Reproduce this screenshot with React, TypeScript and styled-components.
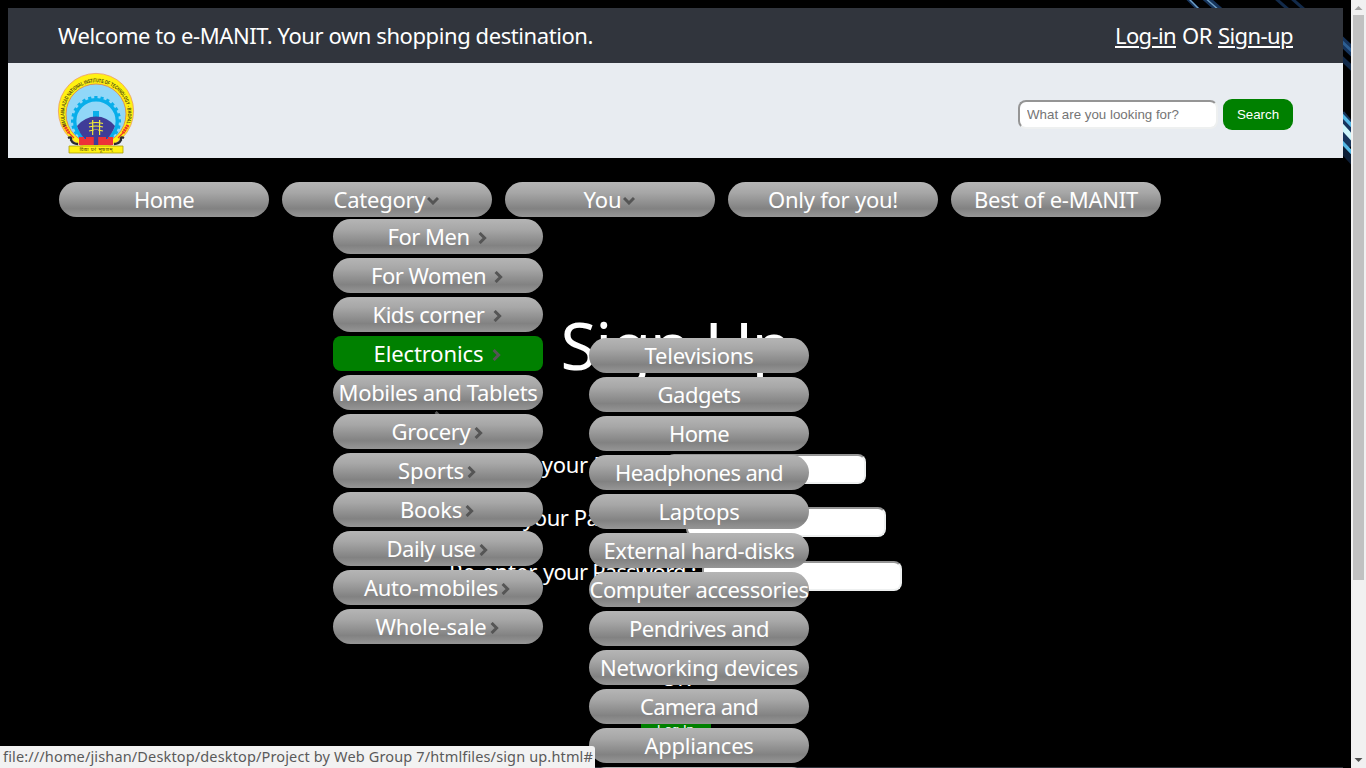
import React, { useLayoutEffect, useRef, useState } from 'react';
import styled, { createGlobalStyle, css } from 'styled-components';

const Global = createGlobalStyle`
  html, body { margin: 0; padding: 0; background: #000; overflow: hidden; }
  * { box-sizing: border-box; }
`;

const Window = styled.div`
  display: flex;
  position: relative;
  width: 1366px;
  height: 768px;
  overflow: hidden;
  background: #000;
  color: #fff;
  font: 22px 'Noto Sans', 'Open Sans', sans-serif;
`;

const Page = styled.main`
  position: relative;
  display: flex;
  flex-direction: column;
  width: 1351px;
  height: 768px;
  padding: 8px 8px 0;
  overflow: hidden;
`;

const Streaks = styled.svg`
  position: absolute;
  top: 0;
  right: 0;
`;

const Greeting = styled.header`
  position: relative;
  display: flex;
  flex: none;
  align-items: center;
  justify-content: space-between;
  height: 55px;
  padding: 0 50px 2px 50px;
  background: #31353d;
`;

const Account = styled.div`
  display: flex;
  gap: 6px;
`;

const Link = styled.a`
  color: #fff;
  span {
    text-decoration: underline;
    text-decoration-thickness: 2px;
    text-underline-offset: 2px;
  }
`;

const Brand = styled.section`
  position: relative;
  display: flex;
  flex: none;
  justify-content: space-between;
  height: 95px;
  padding: 9px 50px 0 49px;
  background: #e8ecf1;
`;

const Search = styled.form`
  display: flex;
  gap: 5px;
  height: 31px;
  margin-top: 27px;
`;

const Field = styled.input`
  width: 200px;
  height: 30px;
  padding: 1px 7px;
  border: 2px solid;
  border-color: #959595 #eef0f0 #eef0f0 #959595;
  border-radius: 8px;
  background: #fff;
  font: 13.33px 'Liberation Sans', Arial, sans-serif;
  &::placeholder { color: #757575; }
`;

const SearchField = styled(Field)`
  margin-top: 1px;
  height: 29px;
  padding: 0 7px;
`;

const Button = styled.button`
  width: 70px;
  height: 31px;
  padding: 0;
  border: 0;
  border-radius: 9px;
  background: #008000;
  color: #fff;
  font: 13.33px 'Liberation Sans', Arial, sans-serif;
`;

const Nav = styled.nav`
  display: flex;
  flex: none;
  gap: 13px;
  margin: 24px 0 0 51px;
`;

const NavItem = styled.div`
  position: relative;
`;

const Pill = styled.div<{ $wide?: boolean; $active?: boolean }>`
  position: relative;
  display: flex;
  align-items: center;
  justify-content: center;
  width: ${p => (p.$wide ? 220 : 210)}px;
  height: 35px;
  padding-bottom: 1px;
  border-radius: 17.5px;
  background: linear-gradient(#b5b5b5 0%, #a7a7a7 30%, #828282 76%, #969696 100%);
  line-height: 30px;
  white-space: nowrap;
  ${p => p.$active && css`
    border-radius: 8px;
    background: #008000;
  `}
`;

const Menu = styled.div`
  position: absolute;
  z-index: 2;
  display: flex;
  flex-direction: column;
  gap: 4px;
  top: 37px;
  left: 51px;
`;

const SubMenu = styled(Menu)`
  top: 2px;
  left: 256px;
`;

const MenuItem = styled.div`
  position: relative;
`;

const Arrow = styled.svg<{ $gap: number }>`
  flex: none;
  margin: 3px 2px 0 ${p => p.$gap}px;
`;

const WrappedArrow = styled.svg`
  position: absolute;
  top: 36px;
  left: 101px;
`;

const SignUp = styled.section`
  display: flex;
  flex-direction: column;
  align-items: center;
  padding-top: 80px;
`;

const Title = styled.h1`
  height: 97px;
  margin: 0;
  font-size: 66px;
  font-weight: 400;
  line-height: 94px;
`;

const Rows = styled.div`
  display: flex;
  flex-direction: column;
  align-items: center;
  gap: 23px;
  padding-top: 60px;
`;

const FormRow = styled.label<{ $trail?: number }>`
  display: flex;
  height: 30px;
  padding-right: ${p => p.$trail ?? 0}px;
  line-height: 21px;
  ${Field} { margin-left: 6px; }
  &:last-child { margin-top: 1px; }
`;

const Or = styled.div`
  margin-top: 72px;
  height: 51px;
  line-height: 28px;
`;

const Bottom = styled.div`
  position: absolute;
  left: 8px;
  right: 8px;
  bottom: 0;
  height: 1px;
  background: #31353d;
`;

const ScrollTrack = styled.aside`
  display: flex;
  flex-direction: column;
  justify-content: space-between;
  align-items: center;
  width: 15px;
  height: 768px;
  background: #f1f1f1;
`;

const Thumb = styled.div`
  width: 11px;
  height: 565px;
  margin-bottom: 173px;
  background: #c1c1c1;
`;

const Status = styled.div`
  position: absolute;
  z-index: 5;
  left: 0;
  bottom: 0;
  display: flex;
  align-items: center;
  width: 595px;
  height: 22px;
  padding: 0 0 2px 3px;
  border-top-right-radius: 3px;
  background: #f2f2f2;
  color: #5a5a5a;
  font-size: 14.5px;
  line-height: 20px;
`;

const Run = styled.span`
  display: inline-block;
  white-space: pre;
`;

/* Tracks a run of text so that it spans the given width. */
function Fit({ w, children }: { w: number; children: string }) {
  const ref = useRef<HTMLSpanElement>(null);
  const [spacing, setSpacing] = useState(0);
  useLayoutEffect(() => {
    if (ref.current) {
      const natural = ref.current.getBoundingClientRect().width;
      setSpacing((w - natural) / children.length);
    }
  }, [w, children]);
  return <Run ref={ref} style={{ letterSpacing: spacing }}>{children}</Run>;
}

function Right({ gap }: { gap: number }) {
  return (
    <Arrow $gap={gap} width="9" height="12" viewBox="0 0 9 12">
      <path d="M1.6 1 6.6 6 1.6 11" fill="none" stroke="#555" strokeWidth="3" />
    </Arrow>
  );
}

function Down() {
  return (
    <Arrow $gap={1} width="12" height="9" viewBox="0 0 12 9">
      <path d="M1 2 6 7 11 2" fill="none" stroke="#555" strokeWidth="3" />
    </Arrow>
  );
}

const categories: [string, number, number][] = [
  ['For Men', 82, 8], ['For Women', 115, 8], ['Kids corner', 112, 8],
  ['Electronics', 110, 8], ['Mobiles and Tablets', 199, 0], ['Grocery', 79, 3],
  ['Sports', 66, 3], ['Books', 62, 3], ['Daily use', 89, 3],
  ['Auto-mobiles', 134, 3], ['Whole-sale', 111, 3],
];

const electronics: [string, number][] = [
  ['Televisions', 109], ['Gadgets', 83], ['Home', 60], ['Headphones and', 168],
  ['Laptops', 81], ['External hard-disks', 191], ['Computer accessories', 219],
  ['Pendrives and', 140], ['Networking devices', 198], ['Camera and', 118],
  ['Appliances', 109], ['', 0],
];

const teeth = Array.from({ length: 24 }, (_, i) => i * 15);

function Logo() {
  return (
    <svg width="78" height="82" viewBox="0 0 78 82">
      <defs>
        <path id="ring" d="M9.5 54 A31.8 31.8 0 1 1 68.5 54" />
        <clipPath id="disc"><circle cx="39" cy="42" r="29.5" /></clipPath>
      </defs>
      <circle cx="39" cy="39" r="37.6" fill="#fff112" stroke="#ee9a62" strokeWidth=".8" />
      <circle cx="39" cy="42" r="30" fill="#91d7f8" stroke="#e28a45" strokeWidth=".9" />
      <g clipPath="url(#disc)">
        <circle cx="39" cy="49" r="21.3" fill="none" stroke="#08aeea" strokeWidth="3.4" />
        {teeth.map(a => (
          <rect key={a} x="37.3" y="24" width="3.2" height="4" fill="#08aeea" transform={`rotate(${a} 39 49)`} />
        ))}
        <path d="M36 46v-7h6v7z" fill="#08aeea" />
        <path d="M20 54Q28 44.5 39 44.5T58 54Q55 62 50 67H28Q22 61 20 54Z" fill="#3f3d98" />
        <path d="M22 67h7v-2h20v2h7v6H22z" fill="#ec3037" />
      </g>
      <path d="M35.7 48v15M42.6 48v15M32 51.5q7-2 14 0M32 55q7-2 14 0M32 59q7-2 14 0" fill="none" stroke="#f4ec38" strokeWidth="1.2" />
      <path d="M22 65h5v2h9v-1h6v1h9v-2h5v8H22z" fill="#ed3338" />
      <rect x="36.8" y="58" width="4.4" height="15" fill="#3f3d98" />
      <path d="M7 53l5 8M71 53l-5 8" stroke="#ee342b" strokeWidth="3.2" strokeDasharray="2 .6" />
      <path d="M11 60l6 6M67 60l-6 6" stroke="#ee342b" strokeWidth="1.2" />
      <path d="M11 66q4-2 3 2 2 4 7 4M67 66q-4-2-3 2-2 4-7 4" fill="none" stroke="#292b30" strokeWidth="2.3" />
      <path d="M12 74h54v7H12z" fill="#fff112" stroke="#aaa00d" strokeWidth=".8" />
      <text fill="#4a4510" fontFamily="Liberation Sans" fontSize="5.4" fontWeight="700" textLength="121" lengthAdjust="spacingAndGlyphs">
        <textPath href="#ring">MAULANA AZAD NATIONAL INSTITUTE OF TECHNOLOGY - BHOPAL</textPath>
      </text>
      <text x="39" y="79.3" textAnchor="middle" fill="#4a4510" fontFamily="Noto Sans, sans-serif" fontSize="5" textLength="33">विद्या परं भूषणम्</text>
    </svg>
  );
}

export default function App() {
  return (
    <Window>
      <Global />
      <Page>
        <Streaks width="200" height="170" viewBox="1151 0 200 170" fill="none">
          <g stroke="#16345c">
            <path d="M1186-3 1200 11M1202-3 1218 11M1207-3 1223 11" strokeWidth="3.5" />
            <path d="M1274-3 1290 11M1290-3 1306 11" strokeWidth="3" opacity=".8" />
            <path d="M1336 36l20 19" strokeWidth="9" />
            <path d="M1336 53l20 19" strokeWidth="5" opacity=".8" />
            <path d="M1336 118l20 24" strokeWidth="21" />
            <path d="M1336 142l20 22" strokeWidth="8" opacity=".6" />
          </g>
          <path d="M1187-3 1201 11M1204-3 1220 11" stroke="#6f9fc4" strokeWidth="1.4" />
          <path d="M1336 36l20 19" stroke="#2d5f94" strokeWidth="3" />
          <path d="M1336 109l20 21M1336 136l20 21" stroke="#55b9e6" strokeWidth="3.4" />
          <path d="M1336 120l20 22" stroke="#cdf6fb" strokeWidth="5.5" />
        </Streaks>
        <Greeting>
          <Fit w={535}>Welcome to e-MANIT. Your own shopping destination.</Fit>
          <Account>
            <Link><Fit w={61}>Log-in</Fit></Link>
            <Fit w={30}>OR</Fit>
            <Link><Fit w={75}>Sign-up</Fit></Link>
          </Account>
        </Greeting>
        <Brand>
          <Logo />
          <Search>
            <SearchField placeholder="What are you looking for?" />
            <Button type="button">Search</Button>
          </Search>
        </Brand>
        <Nav>
          <Pill><Fit w={60}>Home</Fit></Pill>
          <NavItem>
            <Pill><Fit w={92}>Category</Fit><Down /></Pill>
            <Menu>
              {categories.map(([name, w, gap]) => (
                <MenuItem key={name}>
                  <Pill $active={name === 'Electronics'}>
                    <Fit w={w}>{name}</Fit>
                    {gap > 0 && <Right gap={gap} />}
                  </Pill>
                  {gap === 0 && (
                    <WrappedArrow width="9" height="12" viewBox="0 0 9 12">
                      <path d="M1.6 1 6.6 6 1.6 11" fill="none" stroke="#555" strokeWidth="3" />
                    </WrappedArrow>
                  )}
                  {name === 'Electronics' && (
                    <SubMenu>
                      {electronics.map(([item, width]) => (
                        <Pill $wide key={item}><Fit w={width}>{item}</Fit></Pill>
                      ))}
                    </SubMenu>
                  )}
                </MenuItem>
              ))}
            </Menu>
          </NavItem>
          <Pill><Fit w={38}>You</Fit><Down /></Pill>
          <Pill><Fit w={130}>Only for you!</Fit></Pill>
          <Pill><Fit w={164}>Best of e-MANIT</Fit></Pill>
        </Nav>
        <SignUp>
          <Title><Fit w={230}>Sign Up</Fit></Title>
          <Rows>
            <FormRow $trail={3}><Fit w={178}>Enter your Email :</Fit><Field /></FormRow>
            <FormRow><Fit w={215}>Enter your Password :</Fit><Field /></FormRow>
            <FormRow><Fit w={94}>Re-enter </Fit><Fit w={153}>your Password :</Fit><Field /></FormRow>
          </Rows>
          <Or><Fit w={30}>OR</Fit></Or>
          <Button type="button">Log In</Button>
        </SignUp>
        <Bottom />
      </Page>
      <ScrollTrack>
        <svg width="15" height="15"><path d="M3.5 10 7.5 6l4 4z" fill="#a3a3a3" /></svg>
        <Thumb />
        <svg width="15" height="15"><path d="M3.5 5 7.5 9l4-4z" fill="#505050" /></svg>
      </ScrollTrack>
      <Status><Fit w={590}>file:///home/jishan/Desktop/desktop/Project by Web Group 7/htmlfiles/sign up.html#</Fit></Status>
    </Window>
  );
}
